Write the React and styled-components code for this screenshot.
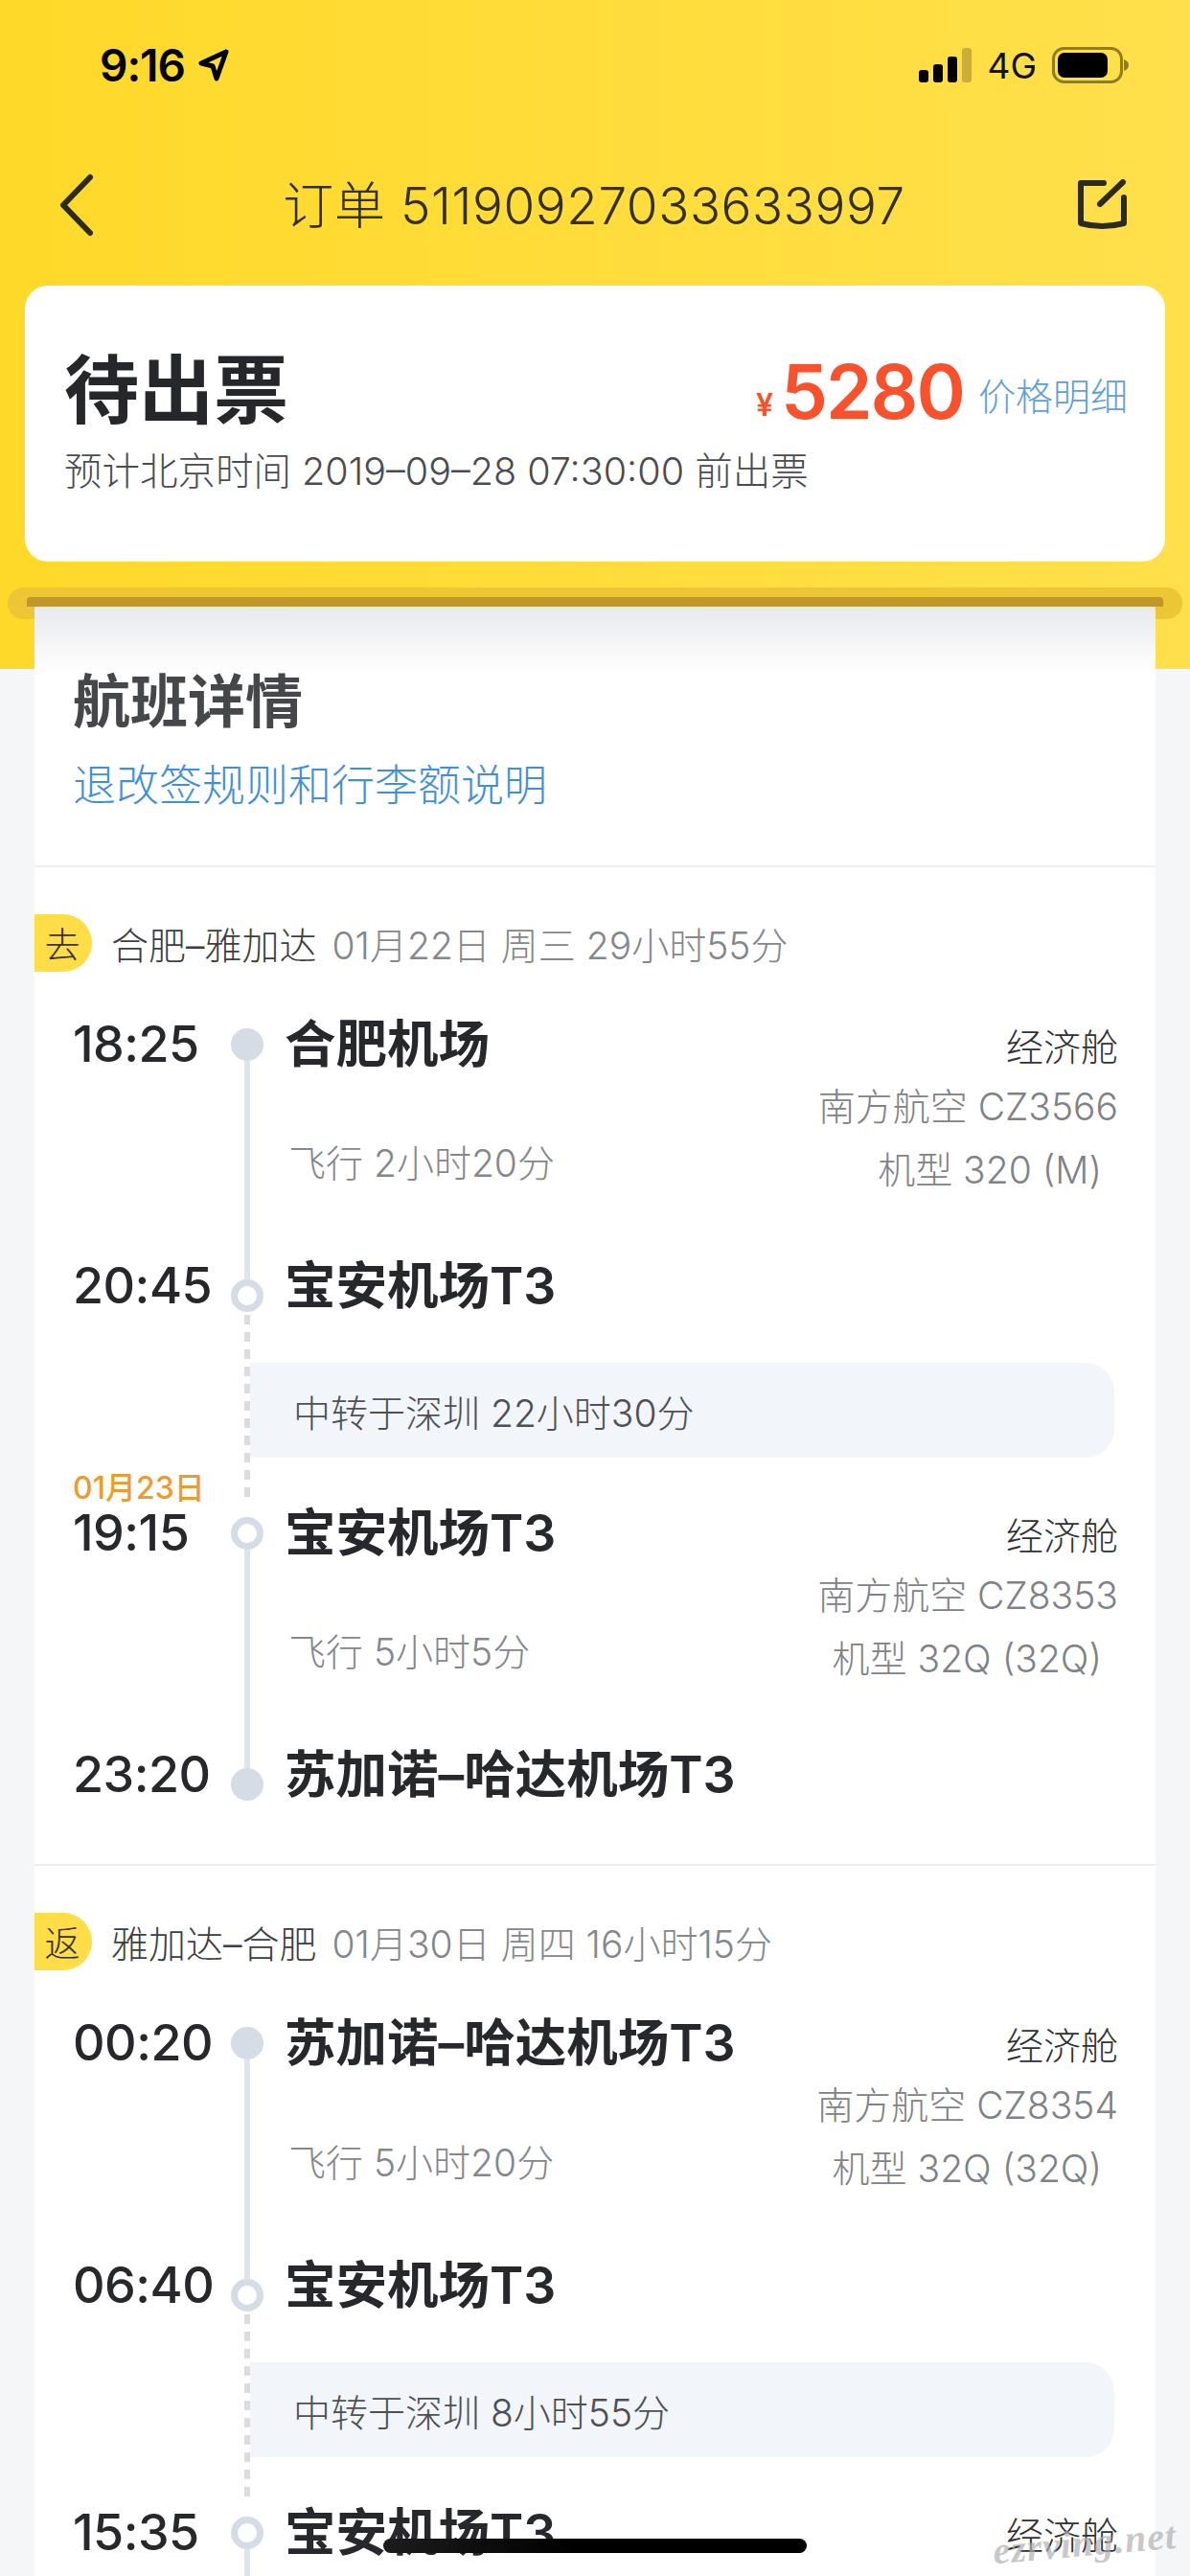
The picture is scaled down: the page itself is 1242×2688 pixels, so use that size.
import React from 'react';
import styled, { createGlobalStyle } from 'styled-components';

const GlobalStyle = createGlobalStyle`
  html, body {
    margin: 0;
    padding: 0;
    background: #f5f6f8;
  }
  * {
    box-sizing: border-box;
  }
`;

const Page = styled.div`
  position: relative;
  width: 1242px;
  height: 2688px;
  overflow: hidden;
  font-family: Inter, 'Noto Sans CJK SC', sans-serif;
  color: #2a2c30;
  background: linear-gradient(90deg, #ffd929, #ffe04c) top / 100% 698px no-repeat, #f5f6f8;
`;

const StatusBar = styled.div`
  height: 136px;
  padding: 0 64px 0 104px;
  display: flex;
  align-items: center;
  justify-content: space-between;
`;

const Clock = styled.div`
  display: flex;
  align-items: center;
  gap: 14px;
  font-size: 46px;
  font-weight: 600;
  letter-spacing: -1px;
  color: #000;
`;

const StatusIcons = styled.div`
  display: flex;
  align-items: center;
  gap: 16px;
  font-size: 37px;
  color: #111;
`;

const NavBar = styled.div`
  height: 156px;
  padding: 0 64px 0 62px;
  display: grid;
  grid-template-columns: 1fr auto 1fr;
  align-items: center;
`;

const NavEnd = styled.div`
  display: flex;
  justify-content: flex-end;
`;

const NavTitle = styled.div`
  padding-bottom: 6px;
  font-size: 53px;
  font-weight: 300;
  letter-spacing: 0.6px;
  color: #33301c;
`;

const StatusCard = styled.div`
  margin: 6px 26px 0;
  height: 288px;
  padding: 67px 39px 0 41px;
  background: #fff;
  border-radius: 24px;
`;

const CardTop = styled.div`
  height: 80px;
  display: flex;
  justify-content: space-between;
  align-items: center;
`;

const CardTitle = styled.div`
  margin-top: 6px;
  font-size: 78px;
  font-weight: 700;
  line-height: 80px;
  color: #25272b;
`;

const Price = styled.div`
  margin-top: 8px;
  display: flex;
  align-items: flex-end;
  color: #f9512b;
`;

const Yen = styled.span`
  font-size: 32px;
  font-weight: 600;
  line-height: 62px;
  margin-right: 8px;
`;

const Amount = styled.span`
  font-size: 78px;
  font-weight: 600;
  line-height: 90px;
  letter-spacing: -2px;
  margin-right: 15px;
`;

const PriceLink = styled.span`
  font-size: 39px;
  font-weight: 300;
  line-height: 80px;
  color: #5f9fe0;
`;

const CardSub = styled.div`
  margin-top: 22px;
  font-size: 39.5px;
  font-weight: 300;
  line-height: 50px;
  color: #4a4c50;
`;

const Slot = styled.div`
  margin: 27px 8px 0;
  height: 33px;
  padding: 10px 20px 0;
  border-radius: 16px;
  background: #edc636;
`;

const SlotGroove = styled.div`
  height: 10px;
  border-radius: 4px 4px 0 0;
  background: #c1962a;
`;

const Paper = styled.div`
  position: relative;
  margin: -13px 36px 0;
  background: linear-gradient(#e8e9eb, #fff 70px) #fff;
`;

const Intro = styled.div`
  height: 272px;
  padding: 64px 41px 0 40px;
  border-bottom: 2px solid #eceef0;
`;

const SectionTitle = styled.div`
  font-size: 60px;
  font-weight: 600;
  line-height: 70px;
  color: #45474b;
`;

const RulesLink = styled.div`
  margin-top: 23px;
  font-size: 45px;
  font-weight: 300;
  line-height: 60px;
  color: #3f8fe0;
`;

const Trip = styled.section`
  padding: 49px 0 63px;
  border-bottom: ${(p) => (p.$last ? 'none' : '2px solid #eceef0')};
`;

const TripHeader = styled.div`
  height: 60px;
  margin-bottom: 46px;
  display: flex;
  align-items: center;
  font-size: 39px;
  font-weight: 300;
  color: #85878b;
`;

const TripTag = styled.div`
  width: 60px;
  height: 60px;
  margin-right: 20px;
  padding-right: 2px;
  display: flex;
  align-items: center;
  justify-content: center;
  border-radius: 0 30px 30px 0;
  background: #ffdd47;
  font-size: 37px;
  color: #33301c;
`;

const TripRoute = styled.span`
  margin-right: 16px;
  color: #3c3e42;
`;

const Leg = styled.div`
  display: grid;
  grid-template-columns: 165px 34px 1fr;
  grid-template-rows: 60px ${(p) => p.$mid}px 60px;
  padding: 0 39px 0 40px;
`;

const Rail = styled.div`
  grid-column: 2;
  grid-row: 1 / 4;
  display: flex;
  flex-direction: column;
  align-items: center;
  padding: 13px 0 3px;
`;

const RailLine = styled.div`
  flex: 1;
  width: 6px;
  background: #e0e3e9;
`;

const Dot = styled.div`
  flex: none;
  width: 34px;
  height: 34px;
  border-radius: 50%;
  border: 7px solid #d5dce5;
  background: ${(p) => (p.$hollow ? '#fff' : '#d5dce5')};
`;

const Time = styled.div`
  grid-column: 1;
  font-size: 52px;
  font-weight: 500;
  line-height: 60px;
  letter-spacing: -0.5px;
  color: #26282c;
`;

const StopRow = styled.div`
  grid-column: 3;
  padding-left: 22px;
  display: flex;
  justify-content: space-between;
  align-items: center;
`;

const Airport = styled.div`
  font-size: 53.5px;
  font-weight: 600;
  line-height: 60px;
  color: #26282c;
`;

const Cabin = styled.div`
  font-size: 39px;
  font-weight: 300;
  color: #2f3135;
`;

const Middle = styled.div`
  grid-column: 3;
  padding-left: 26px;
  display: flex;
  justify-content: space-between;
`;

const Duration = styled.div`
  align-self: center;
  margin-bottom: 10px;
  font-size: 39px;
  font-weight: 300;
  color: #85878b;
`;

const Carrier = styled.div`
  padding-top: 2px;
  text-align: right;
  font-size: 39px;
  font-weight: 300;
  line-height: 66px;
  color: #808286;
`;

const PlaneLine = styled.div`
  padding-right: 17px;
`;

const Transfer = styled.div`
  display: grid;
  grid-template-columns: 179px 6px 1fr;
  height: 198px;
  padding: 0 43px 0 40px;
`;

const TransferDate = styled.div`
  align-self: end;
  font-size: 32px;
  font-weight: 500;
  line-height: 34px;
  color: #ee9b2d;
`;

const DashedLine = styled.div`
  background: repeating-linear-gradient(#dcdcdf 0 10px, transparent 10px 18px);
`;

const TransferBox = styled.div`
  height: 99px;
  margin-top: 50px;
  padding-left: 45px;
  display: flex;
  align-items: center;
  border-radius: 0 30px 30px 0;
  background: #f2f5f9;
  font-size: 39px;
  font-weight: 300;
  color: #4e5054;
`;

const HomeBar = styled.div`
  position: absolute;
  left: 400px;
  top: 2649px;
  width: 442px;
  height: 15px;
  border-radius: 8px;
  background: linear-gradient(90deg, #1c1c1c, #000 45%);
`;

const Watermark = styled.div`
  position: absolute;
  left: 1036px;
  top: 2634px;
  font-family: 'Liberation Serif', serif;
  font-size: 40px;
  line-height: 40px;
  font-style: italic;
  font-weight: 700;
  letter-spacing: 1px;
  white-space: nowrap;
  color: rgba(175, 175, 175, 0.7);
  transform: rotate(-5deg);
`;

const LocationArrow = () => (
  <svg width="32" height="34" viewBox="0 0 32 34">
    <path d="M29 3 L3 15 L15 18 L19 31 Z" fill="none" stroke="#000" strokeWidth="5" strokeLinejoin="round" />
  </svg>
);

const SignalBars = () => (
  <svg width="55" height="36" viewBox="0 0 55 36">
    <rect x="0" y="23" width="10" height="13" rx="3" fill="#000" />
    <rect x="15" y="17" width="10" height="19" rx="3" fill="#000" />
    <rect x="30" y="9" width="10" height="27" rx="3" fill="#000" />
    <rect x="45" y="0" width="10" height="36" rx="3" fill="#c9ae38" />
  </svg>
);

const Battery = () => (
  <svg width="80" height="38" viewBox="0 0 80 38">
    <rect x="1.5" y="1.5" width="71" height="35" rx="11" fill="none" stroke="#8f7d22" strokeWidth="3" />
    <rect x="6" y="6" width="52" height="26" rx="7" fill="#000" />
    <path d="M75 13 C78 14 80 16 80 19 C80 22 78 24 75 25 Z" fill="#8f7d22" />
  </svg>
);

const BackIcon = () => (
  <svg width="36" height="66" viewBox="0 0 36 66">
    <path d="M32 4 L4 33 L32 62" fill="none" stroke="#2c2b20" strokeWidth="6" strokeLinecap="round" strokeLinejoin="round" />
  </svg>
);

const EditIcon = () => (
  <svg width="54" height="54" viewBox="0 0 54 54">
    <path
      d="M28 4 L4 4 L4 46 Q26 52 49 46 L49 19 M24 26 L48 3"
      fill="none"
      stroke="#2c2b20"
      strokeWidth="6"
      strokeLinecap="round"
      strokeLinejoin="round"
    />
  </svg>
);

function FlightLeg({ leg }) {
  return (
    <Leg $mid={leg.mid}>
      <Rail>
        <Dot $hollow={leg.fromHollow} />
        <RailLine />
        <Dot $hollow={leg.toHollow} />
      </Rail>
      <Time>{leg.dep}</Time>
      <StopRow>
        <Airport>{leg.from}</Airport>
        <Cabin>经济舱</Cabin>
      </StopRow>
      <Middle>
        <Duration>{leg.duration}</Duration>
        <Carrier>
          <div>{leg.flight}</div>
          <PlaneLine>{leg.plane}</PlaneLine>
        </Carrier>
      </Middle>
      <Time>{leg.arr}</Time>
      <StopRow>
        <Airport>{leg.to}</Airport>
      </StopRow>
    </Leg>
  );
}

function App() {
  return (
    <Page>
      <GlobalStyle />
      <StatusBar>
        <Clock>
          9:16
          <LocationArrow />
        </Clock>
        <StatusIcons>
          <SignalBars />
          4G
          <Battery />
        </StatusIcons>
      </StatusBar>
      <NavBar>
        <BackIcon />
        <NavTitle>订单 51190927033633997</NavTitle>
        <NavEnd>
          <EditIcon />
        </NavEnd>
      </NavBar>
      <StatusCard>
        <CardTop>
          <CardTitle>待出票</CardTitle>
          <Price>
            <Yen>¥</Yen>
            <Amount>5280</Amount>
            <PriceLink>价格明细</PriceLink>
          </Price>
        </CardTop>
        <CardSub>预计北京时间 2019–09–28 07:30:00 前出票</CardSub>
      </StatusCard>
      <Slot>
        <SlotGroove />
      </Slot>
      <Paper>
        <Intro>
          <SectionTitle>航班详情</SectionTitle>
          <RulesLink>退改签规则和行李额说明</RulesLink>
        </Intro>
        <Trip>
          <TripHeader>
            <TripTag>去</TripTag>
            <TripRoute>合肥–雅加达</TripRoute>
            01月22日 周三 29小时55分
          </TripHeader>
          <FlightLeg
            leg={{
              mid: 192,
              dep: '18:25',
              arr: '20:45',
              from: '合肥机场',
              to: '宝安机场T3',
              toHollow: true,
              duration: '飞行 2小时20分',
              flight: '南方航空 CZ3566',
              plane: '机型 320 (M)',
            }}
          />
          <Transfer>
            <TransferDate>01月23日</TransferDate>
            <DashedLine />
            <TransferBox>中转于深圳 22小时30分</TransferBox>
          </Transfer>
          <FlightLeg
            leg={{
              mid: 192,
              dep: '19:15',
              arr: '23:20',
              from: '宝安机场T3',
              to: '苏加诺–哈达机场T3',
              fromHollow: true,
              duration: '飞行 5小时5分',
              flight: '南方航空 CZ8353',
              plane: '机型 32Q (32Q)',
            }}
          />
        </Trip>
        <Trip $last>
          <TripHeader>
            <TripTag>返</TripTag>
            <TripRoute>雅加达–合肥</TripRoute>
            01月30日 周四 16小时15分
          </TripHeader>
          <FlightLeg
            leg={{
              mid: 193,
              dep: '00:20',
              arr: '06:40',
              from: '苏加诺–哈达机场T3',
              to: '宝安机场T3',
              toHollow: true,
              duration: '飞行 5小时20分',
              flight: '南方航空 CZ8354',
              plane: '机型 32Q (32Q)',
            }}
          />
          <Transfer>
            <div />
            <DashedLine />
            <TransferBox>中转于深圳 8小时55分</TransferBox>
          </Transfer>
          <FlightLeg leg={{ mid: 192, dep: '15:35', from: '宝安机场T3', fromHollow: true }} />
        </Trip>
      </Paper>
      <HomeBar />
      <Watermark>ezrving.net</Watermark>
    </Page>
  );
}

export default App;
